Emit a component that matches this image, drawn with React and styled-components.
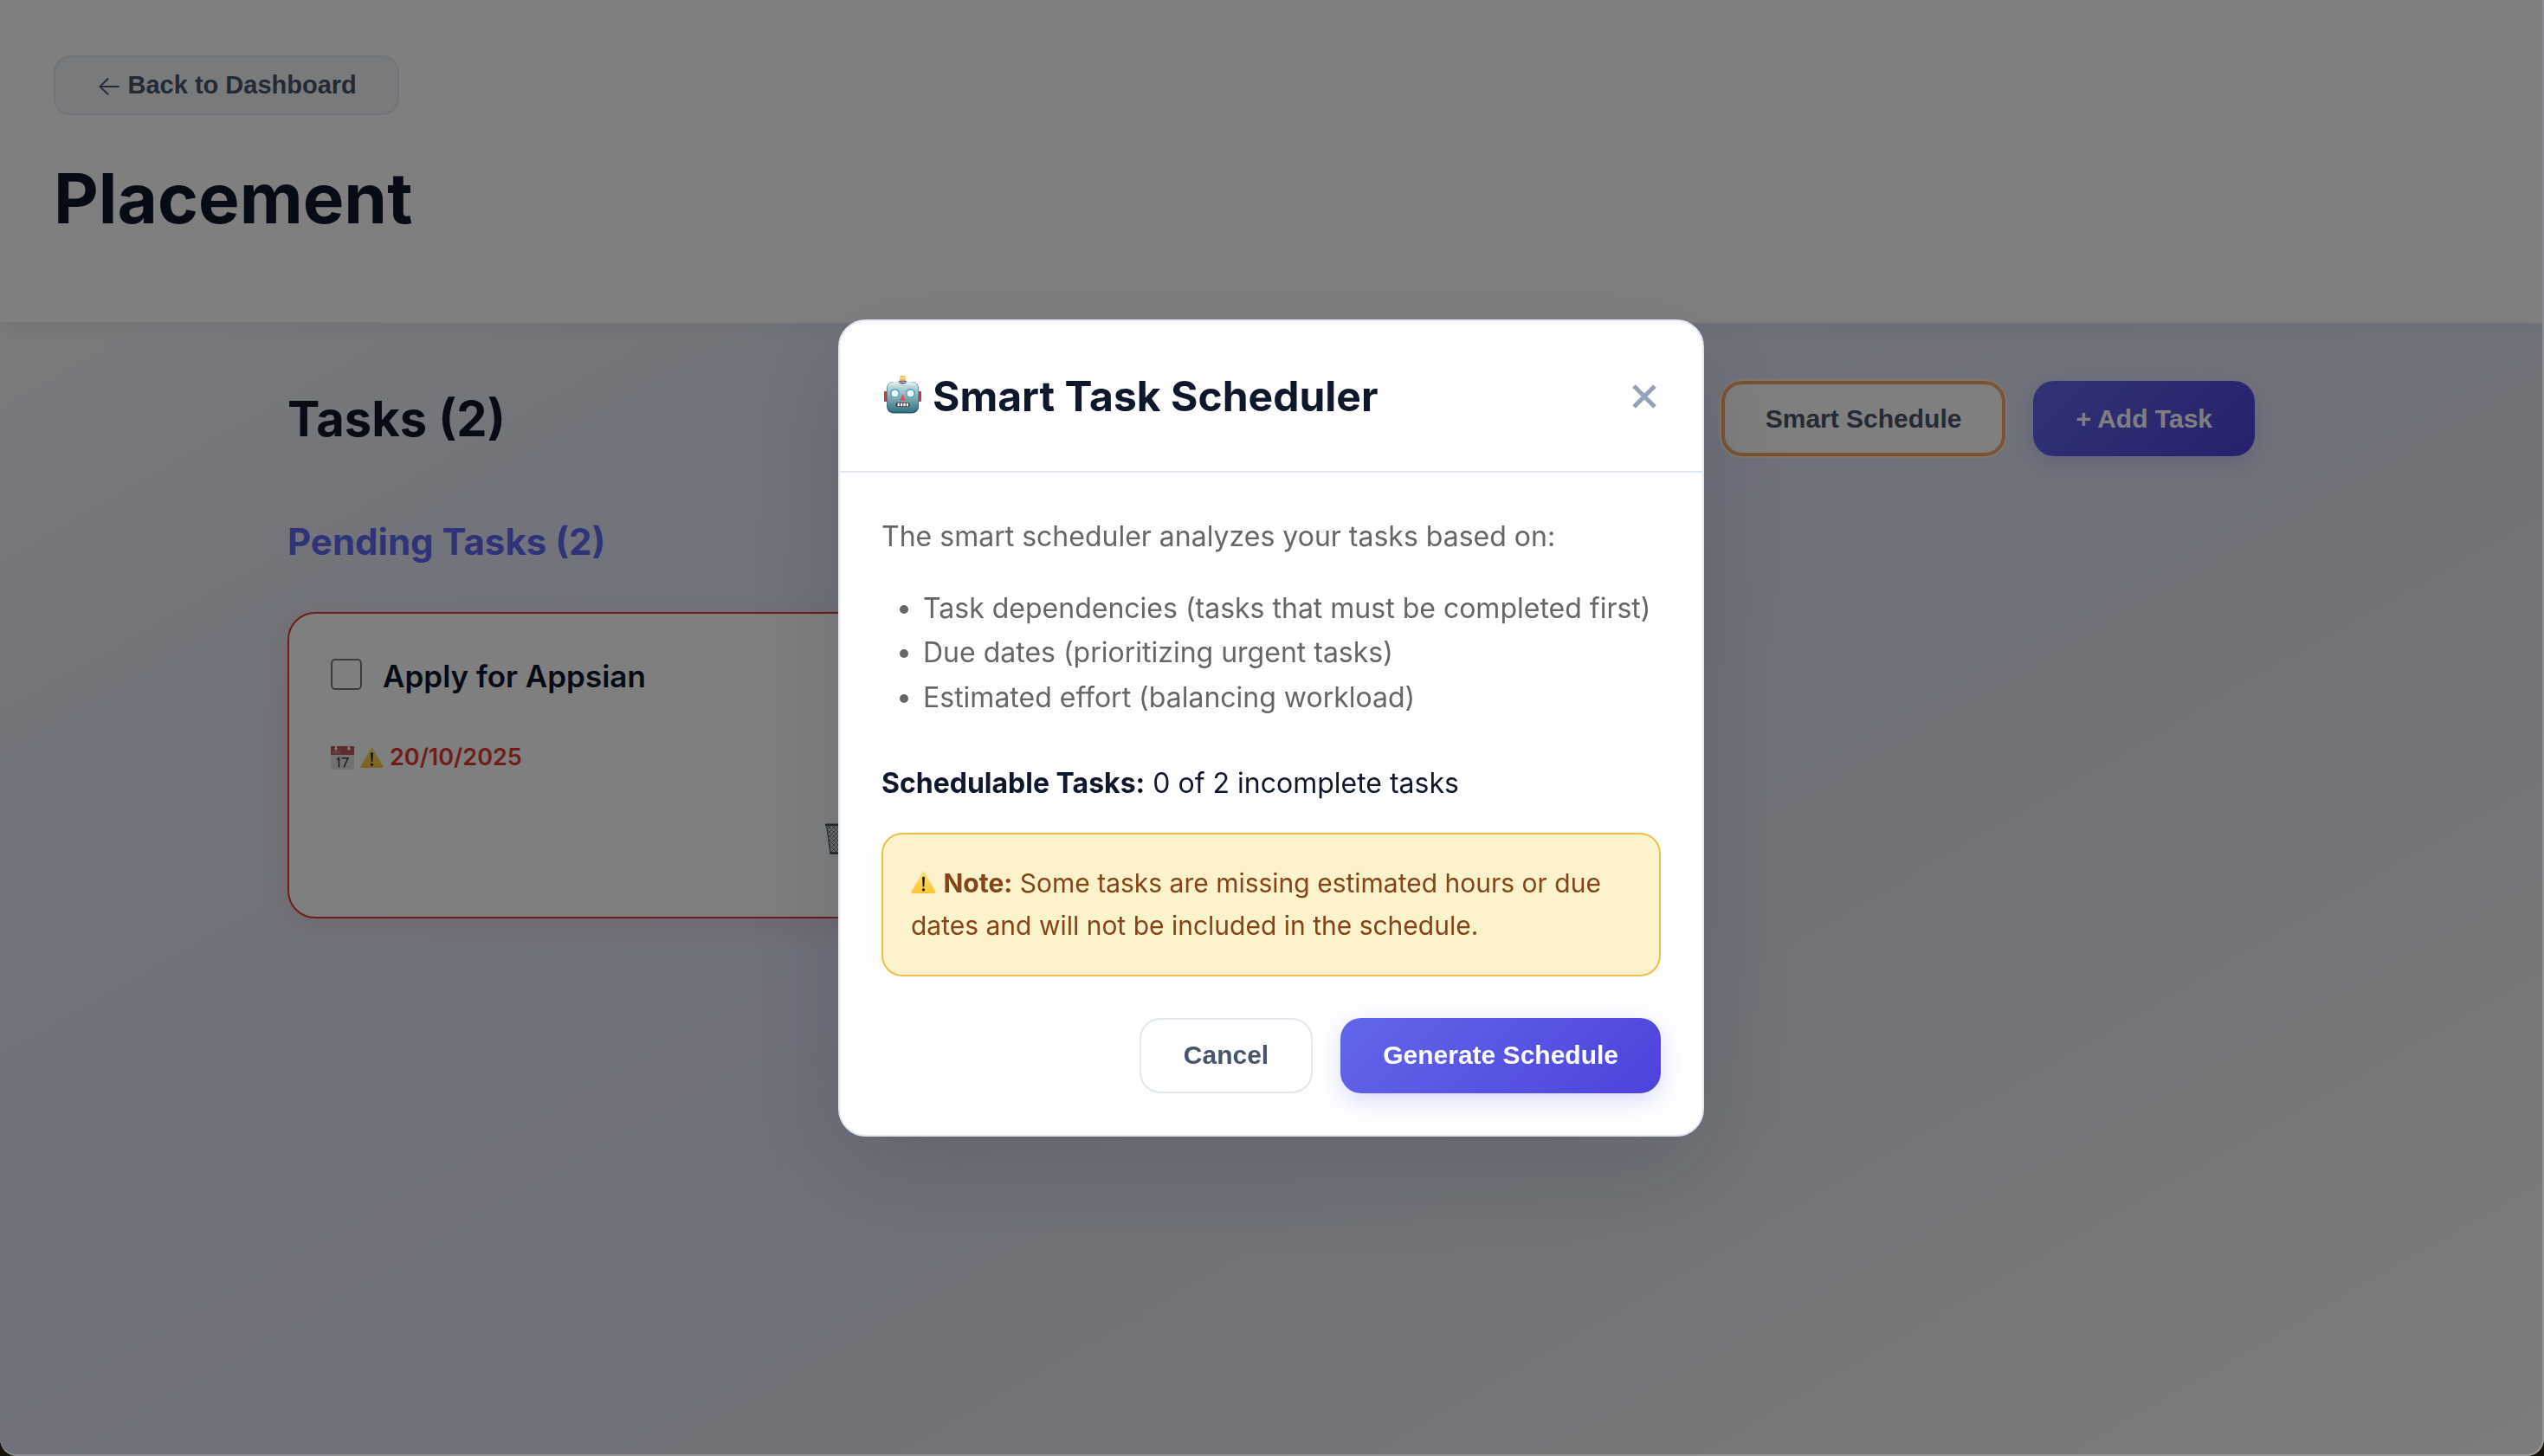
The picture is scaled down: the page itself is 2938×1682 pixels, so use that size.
import React from 'react';
import styled, { createGlobalStyle, css } from 'styled-components';

const GlobalStyle = createGlobalStyle`
  * { box-sizing: border-box; }
  body {
    margin: 0;
    background: #17130a;
    color: #0f172a;
    font-family: Inter, "Liberation Sans", sans-serif;
    font-size: 32px;
    line-height: 1.6;
    -webkit-font-smoothing: antialiased;
  }
  h1, h2, h3, p, ul { margin: 0; }
`;

const Page = styled.div`
  min-height: 100vh;
  padding-right: 2px;
  border-radius: 0 0 20px 20px;
  background: linear-gradient(
    to bottom right,
    #fafafa 0%,
    #f2f3f8 14%,
    #e5e9f6 27%,
    #e0e3f6 50%,
    #e4e8f1 72%,
    #f0f0f2 85%,
    #f8f8f8 100%
  );
`;

const Header = styled.header`
  display: flex;
  flex-direction: column;
  align-items: flex-start;
  gap: 48px;
  padding: 64px 62px 95px;
  background: #ffffff;
  border-bottom: 2px solid #eceef2;
  box-shadow: 0 4px 24px rgba(0, 0, 0, 0.06);
`;

const PageTitle = styled.h1`
  font-size: 80px;
  line-height: 96px;
  font-weight: 700;
`;

const variants = {
  primary: css`
    padding: 0 47px;
    background: linear-gradient(135deg, #6366ea, #4d43dc);
    border-color: transparent;
    background-origin: border-box;
    color: #ffffff;
    box-shadow: 0 8px 28px rgba(99, 102, 241, 0.25);
  `,
  secondary: css`
    padding: 0 49px;
    background: #ffffff;
    border-color: #e2e8f0;
    color: #475569;
  `,
  muted: css`
    padding: 0 47px;
    background: #f1f5f9;
    border-color: #e2e8f0;
    color: #475569;
  `,
};

const Button = styled.button`
  display: inline-flex;
  align-items: center;
  justify-content: center;
  gap: 6px;
  height: ${(p) => (p.$compact ? '69px' : '87px')};
  border: 2px solid transparent;
  border-radius: ${(p) => (p.$compact ? '20px' : '24px')};
  font-family: "Liberation Sans", Arial, sans-serif;
  font-size: ${(p) => (p.$compact ? '29px' : '30px')};
  font-weight: 700;
  white-space: nowrap;
  cursor: pointer;
  ${(p) => variants[p.$variant]}
  ${(p) =>
    p.$highlighted &&
    css`
      box-shadow: inset 0 0 0 2px #f5a565, 0 0 0 2px #fff1dc;
      border-color: #f5a565;
    `}
`;

const Arrow = styled.span`
  font-family: Inter, sans-serif;
  font-size: 32px;
  font-weight: 300;
`;

const Main = styled.main`
  max-width: 2400px;
  margin: 0 auto;
  padding: 66px 64px 64px;
`;

const SectionBar = styled.div`
  display: flex;
  align-items: center;
  justify-content: space-between;
`;

const SectionTitle = styled.h2`
  font-size: 56px;
  line-height: 84px;
  font-weight: 700;
`;

const ButtonGroup = styled.div`
  display: flex;
  justify-content: flex-end;
  gap: 32px;
`;

const GroupTitle = styled.h3`
  margin: 67px 0 49px;
  color: #6366f1;
  font-size: 42px;
  line-height: 64px;
  font-weight: 700;
`;

const TaskGrid = styled.div`
  display: grid;
  grid-template-columns: repeat(auto-fill, minmax(700px, 1fr));
  gap: 48px;
`;

const TaskCard = styled.article`
  display: flex;
  flex-direction: column;
  padding: 48px;
  border: 2px solid #dc3b32;
  border-radius: 32px;
  background: #ffffff;
  box-shadow: 0 8px 32px rgba(220, 60, 60, 0.14);
`;

const TaskLabel = styled.label`
  display: flex;
  align-items: flex-start;
  gap: 24px;
  font-size: 35px;
  line-height: 48px;
  font-weight: 600;
`;

const Checkbox = styled.input`
  appearance: none;
  width: 36px;
  height: 36px;
  margin: 4px 0 0;
  border: 2px solid #767676;
  border-radius: 5px;
  background: #ffffff;
`;

const DueDate = styled.div`
  display: flex;
  align-items: center;
  gap: 7px;
  margin: 52px 0 34px;
  color: #dc3b32;
  font-size: 27px;
  line-height: 36px;
  font-weight: 600;
`;

const CardActions = styled.div`
  display: flex;
  justify-content: flex-end;
`;

const IconButton = styled.button`
  display: flex;
  align-items: center;
  justify-content: center;
  padding: 24px 16px;
  border: 0;
  background: none;
  color: #94a3b8;
  cursor: pointer;
`;

const Overlay = styled.div`
  position: fixed;
  inset: 0;
  display: flex;
  align-items: center;
  justify-content: center;
  padding-top: 2px;
  border: solid rgba(255, 255, 255, 0.2);
  border-width: 0 2px 2px 0;
  border-radius: 0 0 20px 20px;
  background: rgba(0, 0, 0, 0.5);
`;

const Modal = styled.section`
  width: 1000px;
  max-width: 90%;
  border: 2px solid #e2e8f0;
  border-radius: 32px;
  background: #ffffff;
  box-shadow: 0 40px 120px rgba(15, 23, 42, 0.15);
`;

const ModalHeader = styled.div`
  display: flex;
  align-items: center;
  justify-content: space-between;
  padding: 48px;
  border-bottom: 2px solid #e2e8f0;
`;

const ModalTitle = styled.h2`
  display: flex;
  align-items: center;
  gap: 11px;
  font-size: 48px;
  line-height: 77px;
  font-weight: 700;
`;

const CloseButton = styled(IconButton)`
  padding: 8px 5px;
`;

const ModalBody = styled.div`
  display: flex;
  flex-direction: column;
  gap: 32px;
  padding: 48px;
`;

const Intro = styled.p`
  color: #666666;
`;

const Criteria = styled.ul`
  margin-bottom: 16px;
  padding-left: 48px;
  color: #666666;
`;

const Note = styled.p`
  padding: 32px;
  border: 2px solid #f3be48;
  border-radius: 24px;
  background: #fcf2cb;
  color: #87431a;
  font-size: 30px;
  line-height: 49px;
`;

const ModalFooter = styled(ButtonGroup)`
  margin-top: 16px;
`;

const InlineIcon = styled.svg`
  display: inline-block;
  flex: none;
  vertical-align: -3px;
`;

function WarningIcon({ size }) {
  return (
    <InlineIcon width={size} height={size} viewBox="0 0 28 28" aria-hidden="true">
      <defs>
        <linearGradient id="warn" x1="0" y1="0" x2="0" y2="1">
          <stop offset="0" stopColor="#f7df7c" />
          <stop offset="1" stopColor="#f9c62f" />
        </linearGradient>
      </defs>
      <path d="M12.8 2.6Q14 1 15.2 2.6L27.3 24Q28 26 26 26H2Q0 26 .7 24Z" fill="url(#warn)" />
      <path d="M12.6 8.2Q14 6.6 15.4 8.2L14.8 18.4Q14 19.4 13.2 18.4Z" fill="#1d1a12" />
      <circle cx="14" cy="22" r="1.6" fill="#1d1a12" />
    </InlineIcon>
  );
}

function CalendarIcon() {
  return (
    <InlineIcon width="27" height="27" viewBox="0 0 27 27" aria-hidden="true">
      <rect width="27" height="27" fill="#e4e4e4" />
      <rect width="27" height="10" fill="#b65a5a" />
      <path d="M6 0V3M20 0L22 3" stroke="#f4f4f4" strokeWidth="2" />
      <circle cx="6" cy="3" r="1.7" fill="#ffffff" />
      <circle cx="21" cy="3" r="1.7" fill="#ffffff" />
      <path d="M3 5V8H2M5 5V8H7V5M9 5V8H11" fill="none" stroke="#dfb0b0" strokeWidth=".9" />
      <path d="M7 15.5L9.5 13.5V24.5M12.5 13.8H20L15 24.5" fill="none" stroke="#333333" strokeWidth="1.5" />
    </InlineIcon>
  );
}

function RobotIcon() {
  return (
    <InlineIcon width="48" height="48" viewBox="0 0 48 48" aria-hidden="true">
      <defs>
        <linearGradient id="bot" x1="0" y1="0" x2="0" y2="1">
          <stop offset="0" stopColor="#d5eae8" />
          <stop offset=".45" stopColor="#92b5ba" />
          <stop offset="1" stopColor="#2f7384" />
        </linearGradient>
        <linearGradient id="bulb" x1="0" y1="0" x2="0" y2="1">
          <stop offset="0" stopColor="#f0a22c" />
          <stop offset=".5" stopColor="#ffe28a" />
          <stop offset="1" stopColor="#e8862a" />
        </linearGradient>
      </defs>
      <rect x="3" y="18" width="5" height="12" rx="1" fill="#c8383a" />
      <rect x="41" y="18" width="5" height="12" rx="1" fill="#c8383a" />
      <path d="M19 8Q20 5 24.500 5Q29 5 30 8Z" fill="#5b4a80" />
      <circle cx="24.500" cy="2.800" r="3.600" fill="url(#bulb)" />
      <rect x="6" y="7" width="37" height="36.500" rx="8" fill="#2b5663" />
      <rect x="6.500" y="7" width="36" height="35" rx="8" fill="url(#bot)" />
      <path d="M9 10.500Q24 6.500 40 10.500" fill="none" stroke="#f0faf8" strokeWidth="1.500" opacity=".7" />
      <path d="M19 7.800Q24 11 30 7.800" fill="#5b4a80" />
      <circle cx="15.500" cy="20.500" r="4.800" fill="#ffffff" stroke="#52aed6" strokeWidth="2" />
      <circle cx="33.500" cy="20.500" r="4.800" fill="#ffffff" stroke="#52aed6" strokeWidth="2" />
      <path d="M24.500 21L28 28.500H21Z" fill="#d95350" />
      <rect x="16.500" y="31" width="16" height="5" rx="2.200" fill="#3b2b28" />
      <path d="M18.500 33.500H31" stroke="#ffffff" strokeWidth="3.600" strokeDasharray="2.400 1" />
    </InlineIcon>
  );
}

function TrashIcon() {
  return (
    <InlineIcon width="38" height="36" viewBox="0 0 38 36" aria-hidden="true">
      <defs>
        <pattern id="mesh" width="5" height="5" patternUnits="userSpaceOnUse">
          <path d="M0 0L5 5M5 0L0 5" stroke="#59636a" strokeWidth=".9" />
        </pattern>
      </defs>
      <path d="M1.500 2H36.500L32 35H6Z" fill="#dcdedf" />
      <path d="M1.500 2H36.500L32 35H6Z" fill="url(#mesh)" stroke="#59636a" strokeWidth="1.300" />
      <path d="M0 1.800H38M5.500 34.500H32.500" stroke="#46525c" strokeWidth="2.400" />
    </InlineIcon>
  );
}

export default function App() {
  return (
    <>
      <GlobalStyle />
      <Page>
        <Header>
          <Button $variant="muted" $compact>
            <Arrow>←</Arrow>
            Back to Dashboard
          </Button>
          <PageTitle>Placement</PageTitle>
        </Header>
        <Main>
          <SectionBar>
            <SectionTitle>Tasks (2)</SectionTitle>
            <ButtonGroup>
              <Button $variant="secondary" $highlighted>Smart Schedule</Button>
              <Button $variant="primary">+ Add Task</Button>
            </ButtonGroup>
          </SectionBar>
          <GroupTitle>Pending Tasks (2)</GroupTitle>
          <TaskGrid>
            <TaskCard>
              <TaskLabel>
                <Checkbox type="checkbox" />
                Apply for Appsian
              </TaskLabel>
              <DueDate>
                <CalendarIcon />
                <WarningIcon size={27} />
                <span>20/10/2025</span>
              </DueDate>
              <CardActions>
                <IconButton aria-label="Delete task">
                  <TrashIcon />
                </IconButton>
              </CardActions>
            </TaskCard>
          </TaskGrid>
        </Main>
      </Page>
      <Overlay>
        <Modal role="dialog" aria-modal="true" aria-labelledby="scheduler-title">
          <ModalHeader>
            <ModalTitle id="scheduler-title">
              <RobotIcon />
              Smart Task Scheduler
            </ModalTitle>
            <CloseButton aria-label="Close">
              <svg width="28" height="28" viewBox="0 0 28 28" aria-hidden="true">
                <path d="M2 2L26 26M26 2L2 26" stroke="currentColor" strokeWidth="5" />
              </svg>
            </CloseButton>
          </ModalHeader>
          <ModalBody>
            <Intro>The smart scheduler analyzes your tasks based on:</Intro>
            <Criteria>
              <li>Task dependencies (tasks that must be completed first)</li>
              <li>Due dates (prioritizing urgent tasks)</li>
              <li>Estimated effort (balancing workload)</li>
            </Criteria>
            <p>
              <strong>Schedulable Tasks:</strong> 0 of 2 incomplete tasks
            </p>
            <Note>
              <WarningIcon size={29} /> <strong>Note:</strong> Some tasks are missing estimated hours or due
              dates and will not be included in the schedule.
            </Note>
            <ModalFooter>
              <Button $variant="secondary">Cancel</Button>
              <Button $variant="primary">Generate Schedule</Button>
            </ModalFooter>
          </ModalBody>
        </Modal>
      </Overlay>
    </>
  );
}
